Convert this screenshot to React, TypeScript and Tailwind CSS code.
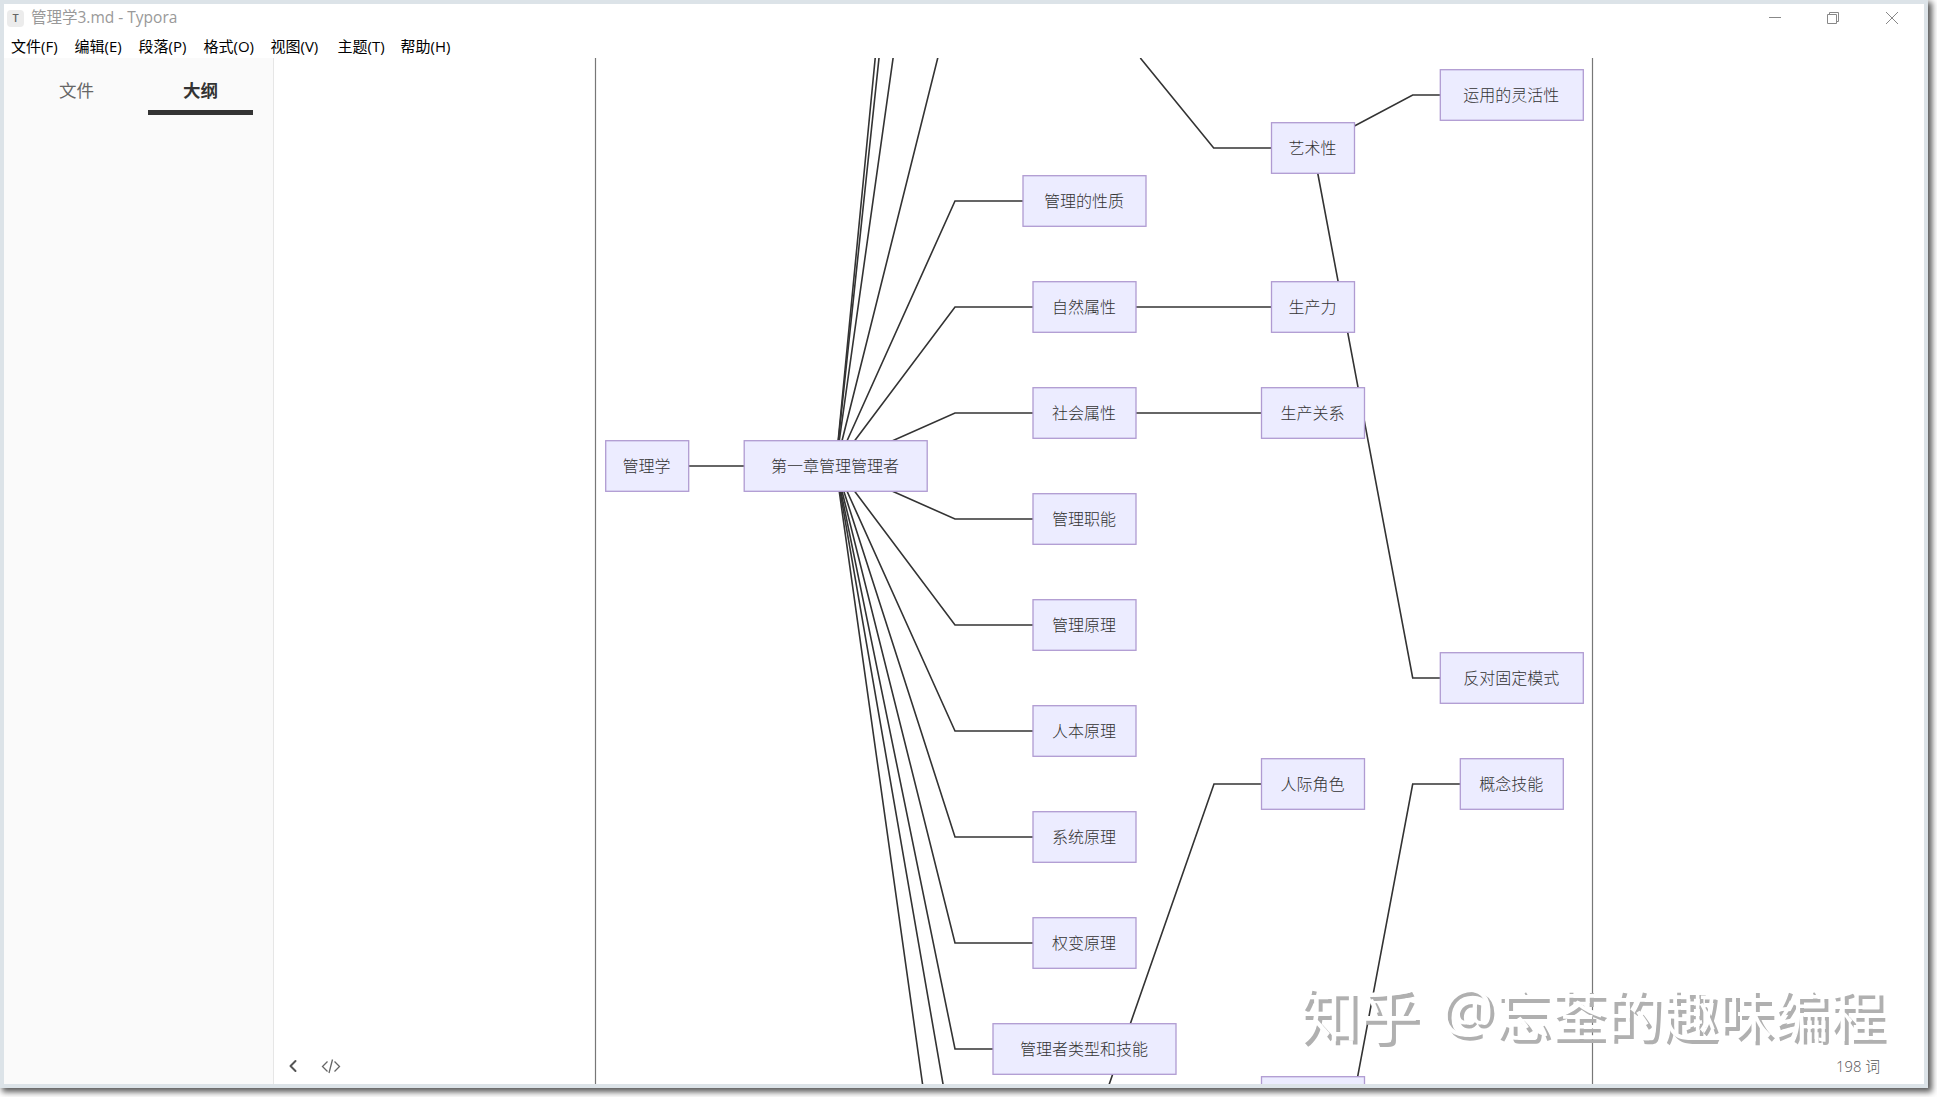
import { ChevronLeft } from 'lucide-react';

interface DiagramNode {
  label: string;
  cx: number;
  cy: number;
  width: number;
}

const menuItems = [
  { label: '文件(F)', width: 'w-[63.5px]' },
  { label: '编辑(E)', width: 'w-16' },
  { label: '段落(P)', width: 'w-[65px]' },
  { label: '格式(O)', width: 'w-[67px]' },
  { label: '视图(V)', width: 'w-[67px]' },
  { label: '主题(T)', width: 'w-[63px]' },
  { label: '帮助(H)', width: 'w-16' },
];

const NODE_HEIGHT = 50.6;

const nodes: DiagramNode[] = [
  { label: '管理学', cx: 647.2, cy: 466, width: 83 },
  { label: '第一章管理管理者', cx: 835.7, cy: 466, width: 183 },
  { label: '管理的性质', cx: 1084.5, cy: 201, width: 123 },
  { label: '自然属性', cx: 1084.5, cy: 307, width: 103 },
  { label: '社会属性', cx: 1084.5, cy: 413, width: 103 },
  { label: '管理职能', cx: 1084.5, cy: 519, width: 103 },
  { label: '管理原理', cx: 1084.5, cy: 625, width: 103 },
  { label: '人本原理', cx: 1084.5, cy: 731, width: 103 },
  { label: '系统原理', cx: 1084.5, cy: 837, width: 103 },
  { label: '权变原理', cx: 1084.5, cy: 943, width: 103 },
  { label: '管理者类型和技能', cx: 1084.5, cy: 1049, width: 183 },
  { label: '艺术性', cx: 1313, cy: 148, width: 83 },
  { label: '生产力', cx: 1313, cy: 307, width: 83 },
  { label: '生产关系', cx: 1313, cy: 413, width: 103 },
  { label: '人际角色', cx: 1313, cy: 784, width: 103 },
  { label: '', cx: 1313, cy: 1102, width: 103 },
  { label: '运用的灵活性', cx: 1511.8, cy: 95, width: 143 },
  { label: '反对固定模式', cx: 1511.8, cy: 678, width: 143 },
  { label: '概念技能', cx: 1511.8, cy: 784, width: 103 },
];

// Rows that branch off the chapter node; the outer ones end outside the viewport
const chapterRows = [-766, -658, -382, -11, 201, 307, 413, 519, 625, 731, 837, 943, 1049, 1153, 1315];

const edges = [
  'M647 466H836',
  'M1084 307H1313',
  'M1084 413H1313',
  'M1140.3 58L1213.7 148H1313',
  'M1313 148L1412.7 95H1512',
  'M1313 148L1412.7 678H1512',
  'M1084.5 1155L1214 784H1313',
  'M1313 1314L1412.7 784H1512',
];

const Diagram = () => (
  <svg
    className="block h-full w-full"
    viewBox="274 58 1650 1026"
    preserveAspectRatio="xMinYMin slice"
  >
    <path d="M595.5 58V1084M1592.5 58V1084" stroke="#777" strokeWidth="1.2" />
    <g fill="none" stroke="#333" strokeWidth="1.6">
      {chapterRows.map((y) => (
        <path key={y} d={`M835.7 466L955 ${y}H1084`} />
      ))}
      {edges.map((d) => (
        <path key={d} d={d} />
      ))}
    </g>
    {nodes.map((node) => (
      <g key={`${node.cx}-${node.cy}`}>
        <rect
          x={node.cx - node.width / 2}
          y={node.cy - NODE_HEIGHT / 2}
          width={node.width}
          height={NODE_HEIGHT}
          fill="#ececff"
          stroke="#b09bd2"
          strokeWidth="1.3"
        />
        <text
          x={node.cx - 0.6}
          y={node.cy + 5.5}
          textAnchor="middle"
          fontSize="16"
          fontWeight="300"
          fill="#333"
        >
          {node.label}
        </text>
      </g>
    ))}
  </svg>
);

const WindowControls = () => (
  <svg className="mt-2 mr-6 h-[13px] w-[131px]" fill="none" stroke="#888" strokeWidth="1">
    <path d="M0 5.5H12" />
    <path d="M58.5 2.5H67.5V11.5H58.5ZM60.5 2.5V0.5H69.5V9.5H67.5" />
    <path d="M117 0L129 12M129 0L117 12" />
  </svg>
);

export default function App() {
  return (
    <div className="relative h-[1097px] w-[1937px] overflow-hidden bg-white font-['Open_Sans','Noto_Sans_CJK_SC',sans-serif]">
      <div className="flex h-[1088px] w-[1928px] flex-col border-4 border-[#dce3e8] bg-white shadow-[3px_3px_6px_1px_rgba(0,0,0,0.65)]">
        <header className="flex h-[30px] shrink-0 justify-between">
          <div className="flex h-7 items-center pl-[3px] text-[15px] text-[#999]">
            <span className="mr-[7px] flex h-[17px] w-[17px] items-center justify-center rounded-sm bg-[#ececec] font-['Open_Sans',sans-serif] text-[11px] font-semibold text-[#666]">
              T
            </span>
            <span className="text-[15.5px] whitespace-nowrap">管理学3.md - Typora</span>
          </div>
          <WindowControls />
        </header>

        <nav className="flex h-6 shrink-0 items-center pl-[7px] text-[15px] text-black">
          {menuItems.map((item) => (
            <button key={item.label} className={`${item.width} shrink-0 text-left whitespace-nowrap`}>
              {item.label}
            </button>
          ))}
        </nav>

        <div className="flex min-h-0 flex-1">
          <aside className="w-[270px] shrink-0 border-r border-[#e6e6e6] bg-[#fafafa]">
            <div className="flex gap-[19px] pl-5 text-[17.5px]">
              <button className="h-[57px] w-[105px] pt-[7px] text-[#666]">文件</button>
              <button className="h-[57px] w-[105px] border-b-[5px] border-[#333] pt-3 font-bold text-[#333]">
                大纲
              </button>
            </div>
          </aside>
          <main className="min-w-0 flex-1">
            <Diagram />
          </main>
        </div>
      </div>

      {/* Footer controls float over the document */}
      <ChevronLeft className="absolute top-[1056px] left-[283px] text-[#555]" size={20} strokeWidth={2.4} />
      <svg
        className="absolute top-[1059px] left-[321px] h-[15px] w-5"
        fill="none"
        stroke="#666"
        strokeWidth="1.3"
      >
        <path d="M6.5 2.5L1.5 7.5L6.5 12.5M13.5 2.5L18.5 7.5L13.5 12.5M11.5 0.5L8 14" />
      </svg>
      <span className="absolute top-[1055px] left-[1836px] text-[14.8px] leading-[22px] font-light whitespace-nowrap text-[#555]">
        198 词
      </span>

      <div className="absolute top-[975px] left-[1299px] flex leading-[80px] whitespace-nowrap text-white [text-shadow:4px_4px_0_#b0b0b0]">
        <span className="w-[141px] text-[60px]">知乎</span>
        <span className="-mt-[7px] w-[54px] text-[60px]">@</span>
        <span className="-mt-px text-[55.8px]">忘荃的趣味编程</span>
      </div>
    </div>
  );
}
